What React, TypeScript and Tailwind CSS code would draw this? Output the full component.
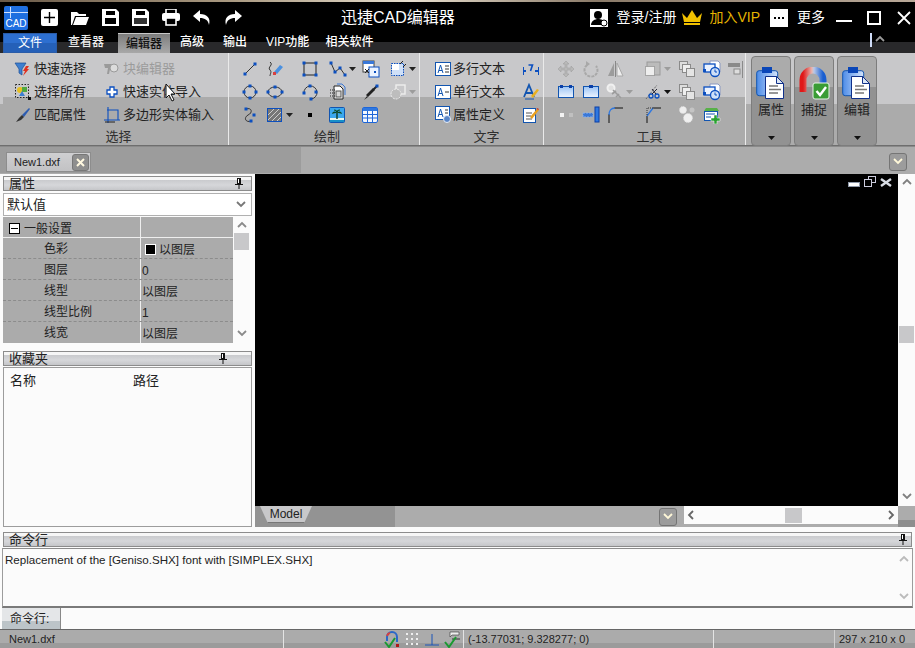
import type { ReactNode } from "react";

const BLUE = "#0b4fc0";

function Ico({ children, w = 18, h = 18 }: { children: ReactNode; w?: number; h?: number }) {
  return (
    <svg width={w} height={h} viewBox={`0 0 ${w} ${h}`} className="block shrink-0">
      {children}
    </svg>
  );
}

function Dot({ x, y, s = 3 }: { x: number; y: number; s?: number }) {
  return <rect x={x - s / 2} y={y - s / 2} width={s} height={s} fill={BLUE} />;
}

function Caret({ color = "#222" }: { color?: string }) {
  return (
    <svg width="7" height="4" viewBox="0 0 7 4" className="block shrink-0">
      <path d="M0 0h7L3.5 4z" fill={color} />
    </svg>
  );
}

const I = {
  funnel: (
    <Ico>
      <path d="M1 3h11L8 9v6l-3-2V9z" fill="#3d7fd0" stroke="#1d4f96" strokeWidth=".7" />
      <path d="M12 6l-3 5h2l-2 5 6-7h-2l2-3z" fill="#e03020" />
    </Ico>
  ),
  selectAll: (
    <Ico>
      <rect x="1.5" y="1.5" width="13" height="13" fill="none" stroke="#222" strokeDasharray="1.5 1.5" />
      <circle cx="6" cy="7" r="3" fill="#e8c020" />
      <rect x="8" y="4" width="5" height="5" fill="#50a840" />
      <path d="M5 13l3-5 3 5z" fill="#3d7fd0" />
      <rect x="14" y="14" width="3" height="3" fill="#111" />
    </Ico>
  ),
  brush: (
    <Ico>
      <path d="M15 2l1 1-6 8-2-2z" fill="#2d5cb0" />
      <path d="M8 9l2 2-3 3-5 2 3-4z" fill="#333" />
    </Ico>
  ),
  blockEdit: (
    <Ico>
      <path d="M1 4h8l2 2v3H7l-1 5H4l1-6H2z" fill="#9a9a9a" />
      <circle cx="11" cy="8" r="4" fill="#dcdcdc" stroke="#9a9a9a" />
    </Ico>
  ),
  plus: (
    <Ico>
      <path d="M7 4h4v3h3v4h-3v3H7v-3H4V7h3z" fill="#fff" stroke={BLUE} strokeWidth="1.3" />
    </Ico>
  ),
  polyInput: (
    <Ico>
      <path d="M5 1v16M1 14h16M4 4h11v10" fill="none" stroke={BLUE} strokeWidth="1.1" />
      <path d="M2 16h10" stroke="#222" />
    </Ico>
  ),
  line: (
    <Ico>
      <path d="M4 14L14 4" stroke="#333" />
      <Dot x={4} y={14} />
      <Dot x={14} y={4} />
    </Ico>
  ),
  pencilCurve: (
    <Ico>
      <path d="M4 2c4 3-3 5 0 8 2 2 0 4 0 6" fill="none" stroke="#333" />
      <path d="M8 12l6-7 3 2-6 7z" fill="#4a90e0" />
      <rect x="7" y="12" width="3" height="3" fill="#d84040" />
    </Ico>
  ),
  rect: (
    <Ico>
      <rect x="3" y="3" width="12" height="12" fill="none" stroke="#222" />
      <Dot x={3} y={3} />
      <Dot x={15} y={3} />
      <Dot x={3} y={15} />
      <Dot x={15} y={15} />
    </Ico>
  ),
  polyline: (
    <Ico>
      <path d="M2 3l4 9 5-4 5 7" fill="none" stroke="#333" />
      <Dot x={2} y={3} />
      <Dot x={6} y={12} />
      <Dot x={11} y={8} />
      <Dot x={16} y={15} />
    </Ico>
  ),
  copyRect: (
    <Ico>
      <rect x="1" y="1" width="11" height="11" fill="#fff" stroke="#444" />
      <rect x="1" y="1" width="11" height="3" fill="#3a78d8" />
      <rect x="7" y="7" width="10" height="10" fill="#eaf2ff" stroke={BLUE} />
      <path d="M3 9l4 4M3 13l4-4" stroke="#222" />
      <Dot x={13} y={12} s={2} />
    </Ico>
  ),
  hatchBox: (
    <Ico>
      <rect x="2.5" y="3.5" width="12" height="12" fill="#cfe0f8" stroke={BLUE} strokeDasharray="1.5 1" />
      <path d="M3 4h7v6H3z" fill="#fff" />
      <path d="M11 4l3-3M14 7l3-3" stroke="#222" />
    </Ico>
  ),
  circle: (
    <Ico>
      <circle cx="9" cy="9" r="6" fill="none" stroke="#333" />
      <Dot x={9} y={3} />
      <Dot x={3} y={9} />
      <Dot x={15} y={9} />
      <Dot x={9} y={15} />
    </Ico>
  ),
  ellipse: (
    <Ico>
      <ellipse cx="9" cy="9" rx="7" ry="5" fill="none" stroke="#333" />
      <Dot x={9} y={4} />
      <Dot x={2} y={9} />
      <Dot x={16} y={9} />
      <Dot x={9} y={14} />
    </Ico>
  ),
  arc: (
    <Ico>
      <path d="M3 10A6.500 6.500 0 1 1 10 16" fill="none" stroke="#333" />
      <Dot x={3} y={10} />
      <Dot x={9} y={3} />
      <Dot x={15} y={9} />
      <Dot x={10} y={16} />
    </Ico>
  ),
  doc3: (
    <Ico>
      <path d="M5 3h6l3 3v10H5z" fill="#fff" stroke="#222" />
      <path d="M8 1h5l3 3v8" fill="none" stroke="#3a78d8" />
      <path d="M1 7h5M1 10h5M1 13h5" stroke="#222" strokeDasharray="1 1" />
      <rect x="7" y="8" width="5" height="6" fill="#d8d8d8" stroke="#555" />
    </Ico>
  ),
  dropper: (
    <Ico>
      <path d="M4 12l7-7 2 2-7 7z" fill="#222" />
      <path d="M11 7l4-4" stroke="#222" strokeWidth="2" />
      <path d="M2 17l3-4 1 1z" fill="#222" />
      <Dot x={15} y={3} />
    </Ico>
  ),
  ghost: (
    <Ico>
      <rect x="7" y="2" width="9" height="9" fill="none" stroke="#eee" strokeWidth="1.4" />
      <circle cx="7" cy="11" r="5" fill="#bdbdbd" stroke="#eee" strokeDasharray="2 1" />
    </Ico>
  ),
  spline: (
    <Ico>
      <path d="M5 3c6-2 7 4 2 6-5 3-2 8 3 6" fill="none" stroke="#333" />
      <Dot x={5} y={3} />
      <Dot x={13} y={9} />
      <Dot x={10} y={15} />
    </Ico>
  ),
  hatch: (
    <Ico>
      <rect x="1.500" y="2.500" width="14" height="13" fill="#777" stroke={BLUE} />
      <path d="M2 9l6-6M2 14l11-11M6 15l9-9M11 15l4-4" stroke="#ccc" />
    </Ico>
  ),
  point: (
    <Ico>
      <rect x="7" y="7" width="4" height="4" fill="#000" />
    </Ico>
  ),
  palm: (
    <Ico w={16} h={16}>
      <rect x=".5" y=".5" width="15" height="15" rx="1" fill="#3aa8ee" stroke="#1255b0" />
      <rect x="1" y="11" width="14" height="2" fill="#e8f8f0" />
      <rect x="1" y="13" width="14" height="2" fill="#1890c8" />
      <path d="M8 12V6" stroke="#0c3a20" strokeWidth="1.4" />
      <path d="M3 7c1-3 3-3 5-1 2-2 4-2 5 1-2-1-3-1-5-1-2 0-3 0-5 1z" fill="#0c4a28" />
      <path d="M5 3c2 0 3 1 3 3 0-2 1-3 3-3" fill="none" stroke="#0c4a28" strokeWidth="1.2" />
    </Ico>
  ),
  table: (
    <Ico w={16} h={16}>
      <rect x=".5" y=".5" width="15" height="15" rx="1.5" fill="#f4f8ff" stroke="#1e66d8" />
      <rect x="1" y="1" width="14" height="3" fill="#2f78e0" />
      <path d="M1 7.500h14M1 11h14M5.500 4v11M10.500 4v11" stroke="#1e66d8" />
    </Ico>
  ),
  textM: (
    <Ico w={16} h={16}>
      <rect x=".5" y="1.500" width="15" height="13" fill="#fff" stroke="#1255b0" />
      <path d="M3 12l2.500-8L8 12M4 9.500h3" fill="none" stroke="#1255b0" />
      <path d="M10 5h4M10 8h4M10 11h4" stroke="#333" />
    </Ico>
  ),
  textS: (
    <Ico w={16} h={16}>
      <rect x=".5" y="1.500" width="15" height="13" fill="#fff" stroke="#1255b0" />
      <path d="M3 12l2.500-8L8 12M4 9.500h3" fill="none" stroke="#1255b0" />
      <path d="M10 8h4" stroke="#333" />
    </Ico>
  ),
  textAttr: (
    <Ico w={16} h={17}>
      <rect x=".5" y=".5" width="14" height="13" fill="#fff" stroke="#1255b0" />
      <path d="M3 11l2.500-8L8 11M4 8.500h3" fill="none" stroke="#1255b0" />
      <path d="M10 4h3M10 7h3" stroke="#333" />
      <circle cx="12" cy="13" r="3.500" fill="#5a86c8" stroke="#e8eef8" />
    </Ico>
  ),
  num: (
    <Ico w={16} h={16}>
      <path d="M0 10h16" stroke="#0b4fc0" strokeDasharray="3 1" strokeWidth="2" />
      <rect x="4" y="3" width="8" height="8" fill="#c8c8ca" />
      <path d="M5.500 4h4l-2 6" fill="none" stroke="#0b4fc0" strokeWidth="1.600" />
      <path d="M.5 6v8M15.500 6v8" stroke="#0b4fc0" />
    </Ico>
  ),
  aPen: (
    <Ico w={16} h={18}>
      <path d="M1 14L6 2l5 12M3 10h6" fill="none" stroke="#1255b0" strokeWidth="1.800" />
      <path d="M8 13l6-7 2 1-6 8z" fill="#e8b020" />
      <path d="M2 16h9" stroke="#1255b0" />
    </Ico>
  ),
  editNote: (
    <Ico w={16} h={18}>
      <rect x=".5" y="2.500" width="12" height="14" fill="#fff" stroke="#1255b0" />
      <path d="M3 7h6M3 10h5M3 13h6" stroke="#555" />
      <path d="M7 11l7-8 2 1-7 9z" fill="#e8a020" />
      <path d="M13 3l2-1 1 2" fill="#d03020" />
    </Ico>
  ),
  move: (
    <Ico>
      <path d="M9 1l3 3h-2v4h4V6l3 3-3 3v-2h-4v4h2l-3 3-3-3h2v-4H4v2L1 9l3-3v2h4V4H6z" fill="#b8b8b8" stroke="#9a9a9a" strokeWidth=".5" />
    </Ico>
  ),
  rotate: (
    <Ico>
      <path d="M5 5a6.500 6.500 0 1 0 9 1" fill="none" stroke="#a8a8a8" strokeWidth="2" strokeDasharray="3 1" />
      <path d="M4 1l4 3-4 3z" fill="#a8a8a8" />
    </Ico>
  ),
  mirror: (
    <Ico>
      <path d="M8 3v13L2 16z" fill="#9c9c9c" />
      <path d="M11 3v13h6z" fill="#eee" stroke="#a8a8a8" />
      <path d="M9.500 1v16" stroke="#888" />
    </Ico>
  ),
  scaleBox: (
    <Ico>
      <rect x="3" y="2" width="13" height="13" fill="#bbb" stroke="#9a9a9a" />
      <rect x="1.500" y="6.500" width="9" height="9" fill="#eee" stroke="#777" strokeDasharray="1 1" />
    </Ico>
  ),
  layers: (
    <Ico>
      <rect x="1.500" y="1.500" width="8" height="8" fill="#ddd" stroke="#8a8a8a" />
      <rect x="4.500" y="4.500" width="8" height="8" fill="#eee" stroke="#8a8a8a" />
      <rect x="8.500" y="8.500" width="8" height="8" fill="#e4e4e4" stroke="#8a8a8a" />
    </Ico>
  ),
  windowClock: (
    <Ico>
      <path d="M7 1h8l2 2v9H7z" fill="#fff" stroke="#8a98c0" />
      <rect x="1" y="4" width="11" height="8" fill="#eaf2ff" stroke={BLUE} strokeWidth="1.300" />
      <rect x="0" y="9" width="3" height="3" fill={BLUE} />
      <circle cx="12" cy="12" r="4.500" fill="#cfe0f8" stroke={BLUE} strokeWidth="1.300" />
      <path d="M12 9.500V12h2" stroke={BLUE} fill="none" />
    </Ico>
  ),
  align: (
    <Ico>
      <rect x="1" y="3" width="12" height="4" fill="#8a8a8a" />
      <rect x="7" y="9" width="6" height="5" fill="#ddd" stroke="#8a8a8a" />
      <path d="M15.500 1v17" stroke="#8a8a8a" />
    </Ico>
  ),
  cal: (
    <Ico>
      <defs>
        <linearGradient id="calg" x1="0" y1="0" x2="0" y2="1">
          <stop offset="0" stopColor="#9cc4f4" />
          <stop offset="1" stopColor="#eef5ff" />
        </linearGradient>
      </defs>
      <rect x="1.500" y="3.500" width="15" height="11" fill="url(#calg)" stroke="#1255b0" />
      <rect x="3" y="2" width="3" height="3" fill="#0b3fa8" />
      <rect x="12" y="2" width="3" height="3" fill="#0b3fa8" />
    </Ico>
  ),
  calWide: (
    <Ico>
      <rect x="1.500" y="3.500" width="15" height="11" fill="url(#calg)" stroke="#1255b0" />
      <rect x="7" y="2" width="4" height="3" fill="#0b3fa8" />
    </Ico>
  ),
  magGhost: (
    <Ico>
      <circle cx="5" cy="5" r="3.500" fill="#e0e0e0" stroke="#f0f0f0" strokeWidth="2" />
      <path d="M7 7l8 8M6 11l4-3M10 14l3-3" stroke="#9c9c9c" strokeWidth="1.600" />
    </Ico>
  ),
  scissors: (
    <Ico>
      <path d="M2 16L13 2" stroke="#555" strokeDasharray="1 1" />
      <circle cx="7" cy="13" r="2" fill="none" stroke={BLUE} strokeWidth="1.300" />
      <circle cx="13" cy="13" r="2" fill="none" stroke={BLUE} strokeWidth="1.300" />
      <path d="M8 11l5-5M12 11L8 6" stroke="#223" />
    </Ico>
  ),
  dots2: (
    <Ico>
      <rect x="3" y="7" width="4" height="4" fill="#f4f4f4" />
      <rect x="12" y="7" width="4" height="4" fill="#c0c0c0" />
    </Ico>
  ),
  extend: (
    <Ico>
      <rect x="1" y="7" width="10" height="4" fill="#3a78d8" stroke="#8ab0e8" strokeDasharray="2 1" />
      <rect x="13" y="1" width="4" height="15" fill="#2f78e0" stroke="#0b3fa8" />
    </Ico>
  ),
  fillet: (
    <Ico>
      <path d="M3 17V8" stroke="#111" />
      <path d="M8 2h9" stroke="#111" />
      <path d="M3 9C3 5 5 2 9 2" fill="none" stroke="#2f78e0" strokeWidth="1.300" />
    </Ico>
  ),
  chamfer: (
    <Ico>
      <path d="M3 17V10" stroke="#111" />
      <path d="M9 2h8" stroke="#111" />
      <path d="M3 10l6-8" stroke="#2f78e0" strokeWidth="1.400" />
      <path d="M3 9V2h6" fill="none" stroke="#333" strokeDasharray="1 1" />
    </Ico>
  ),
  blobs: (
    <Ico>
      <circle cx="5" cy="4" r="3.500" fill="#eee" stroke="#ddd" strokeDasharray="1 1" />
      <circle cx="14" cy="4" r="2.500" fill="#c4c4c4" />
      <circle cx="10" cy="12" r="4.500" fill="#f0f0f0" stroke="#ddd" strokeDasharray="1 1" />
    </Ico>
  ),
  addLayer: (
    <Ico>
      <path d="M1 5l2-3h11l2 3z" fill="#58b048" />
      <rect x="1.500" y="5.500" width="13" height="9" fill="#fff" stroke="#1255b0" />
      <path d="M3 8h9M3 11h5" stroke="#1255b0" />
      <path d="M11 9h3v3h3v3h-3v3h-3v-3H8v-3h3z" fill="#2aa030" stroke="#fff" strokeWidth=".5" />
    </Ico>
  ),
};

function Clipboard() {
  return (
    <svg width="30" height="33" viewBox="0 0 30 33" className="block">
      <defs>
        <linearGradient id="clipg" x1="0" y1="0" x2="1" y2="0">
          <stop offset="0" stopColor="#4d8ce8" />
          <stop offset="1" stopColor="#d4e4fb" />
        </linearGradient>
      </defs>
      <rect x=".7" y="3.700" width="21" height="25" rx="2.500" fill="url(#clipg)" stroke="#1255b0" />
      <rect x="6" y="0" width="10" height="6" fill="#0a46b8" />
      <path d="M9.500 9.500h11l7 7v15h-18z" fill="#fff" stroke="#10308a" />
      <path d="M20.500 9.500v7h7z" fill="#dbe6f5" stroke="#10308a" />
      <path d="M13 19h9M13 22.500h12M13 26h9" stroke="#777" strokeWidth="1.600" />
    </svg>
  );
}

function Magnet() {
  return (
    <svg width="32" height="33" viewBox="0 0 32 33" className="block">
      <defs>
        <linearGradient id="mg" x1="0" y1="0" x2="1" y2="0">
          <stop offset="0" stopColor="#e01818" />
          <stop offset=".45" stopColor="#e8b8b0" />
          <stop offset=".55" stopColor="#b8c8e8" />
          <stop offset="1" stopColor="#1a5ed0" />
        </linearGradient>
      </defs>
      <path d="M5 25V13a10 10 0 0 1 20 0v10" fill="none" stroke="url(#mg)" strokeWidth="7" />
      <rect x="15" y="16" width="16" height="16" rx="2" fill="#3a9c34" stroke="#e8f4e8" />
      <path d="M18.500 24l3.500 4 6-8" fill="none" stroke="#fff" strokeWidth="2.400" />
    </svg>
  );
}

function IconRow({ cols, items }: { cols: string; items: ReactNode[] }) {
  return (
    <div className={`grid h-[23px] items-center justify-items-start ${cols}`}>
      {items.map((it, i) => (
        <div key={i} className="flex items-center gap-[2px]">
          {it}
        </div>
      ))}
    </div>
  );
}

function withCaret(icon: ReactNode, color?: string) {
  return (
    <>
      {icon}
      <Caret color={color} />
    </>
  );
}

function SelectItem({ icon, label, muted }: { icon: ReactNode; label: string; muted?: boolean }) {
  return (
    <div className="flex h-[23px] items-center gap-[2px]">
      {icon}
      <span className={`text-[13px] whitespace-nowrap ${muted ? "text-[#9b9b9b]" : "text-[#222]"}`}>{label}</span>
    </div>
  );
}

function RibbonGroup({ width, label, labelPad, children }: { width: string; label: string; labelPad: string; children: ReactNode }) {
  return (
    <div className={`relative h-full border-r border-[#eaeaea] bg-[linear-gradient(#c8c8ca_44px,#ababab_44px)] pt-[4px] ${width}`}>
      {children}
      <div className={`absolute right-0 bottom-[-1px] left-0 text-center text-[13px] leading-[18px] text-[#2f2f2f] ${labelPad}`}>{label}</div>
    </div>
  );
}

function BigButton({ icon, label }: { icon: ReactNode; label: string }) {
  return (
    <div className="flex h-[90px] w-[40px] flex-col items-center rounded-[4px] border border-[#7d7d7d] bg-[linear-gradient(#ababab_30px,#929292_30px)] pt-[10px]">
      <div className="flex h-[33px] items-center">{icon}</div>
      <div className="text-[13px] leading-[20px] text-[#222]">{label}</div>
      <div className="mt-auto mb-[5px]">
        <Caret color="#111" />
      </div>
    </div>
  );
}

function PanelTitle({ label, pinRight }: { label: string; pinRight: number }) {
  return (
    <div className="flex h-[15px] items-center justify-between border border-[#8c8c8c] bg-[linear-gradient(#f6f6f6_3px,#c9cacd_3px,#d6d7da_8px,#c5c6c9)] pr-[3px] pl-[5px]">
      <span className="text-[13px] leading-[13px] text-[#222]">{label}</span>
      <span style={{ marginRight: pinRight }}>
        <svg width="8" height="11" viewBox="0 0 8 11" className="block">
          <path d="M2 0h4v6h2v1H0V6h2zM3.500 7h1v4h-1z" fill="#111" />
          <rect x="3" y="1" width="1" height="4" fill="#fff" />
        </svg>
      </span>
    </div>
  );
}

function Chevron({ dir, className = "" }: { dir: "up" | "down" | "left" | "right"; className?: string }) {
  const d = { up: "M1 6l4-4 4 4", down: "M1 2l4 4 4-4", left: "M7 1L3 5l4 4", right: "M3 1l4 4-4 4" }[dir];
  return (
    <svg width="10" height="10" viewBox="0 0 10 10" className={`block ${className}`}>
      <path d={d} fill="none" stroke="currentColor" strokeWidth="1.800" />
    </svg>
  );
}

function ChevronBtn() {
  return (
    <div className="flex h-[18px] w-[18px] items-center justify-center rounded-[3px] border border-[#757575] bg-[#9c9c9c] text-[#fff8d8]">
      <Chevron dir="down" />
    </div>
  );
}

const PROPS: [string, ReactNode][] = [
  ["色彩", (
    <span className="flex items-center gap-[3px] pl-[3px]">
      <span className="block h-[11px] w-[11px] border border-white bg-black" />
      以图层
    </span>
  )],
  ["图层", "0"],
  ["线型", "以图层"],
  ["线型比例", "1"],
  ["线宽", "以图层"],
];

export default function App() {
  const drawCols = "grid-cols-[25px_35px_28px_33px_27px_30px]";
  const toolCols = "grid-cols-[25px_24px_38px_34px_25px_24px_18px]";
  return (
    <div className="relative flex h-[648px] w-[915px] flex-col overflow-hidden bg-[#fbfbfb] font-['Liberation_Sans','Noto_Sans_CJK_SC',sans-serif]">
      {/* title bar */}
      <div className="h-[2px] bg-[linear-gradient(90deg,#6a5a48,#a89880_25%,#e8e0d0_45%,#8a7a68_65%,#b8a898)]" />
      <div className="relative flex h-[31px] items-center bg-black text-white">
        <svg width="24" height="24" viewBox="0 0 24 24" className="ml-[4px]">
          <rect width="24" height="24" rx="2" fill="#1f6fe0" />
          <path d="M0 6.500h24M6.500 1v11" stroke="#cfe0ff" />
          <text x="12" y="21" textAnchor="middle" fontSize="10" fill="#fff" fontFamily="Liberation Sans">CAD</text>
        </svg>
        <div className="ml-[13px] flex items-center gap-[13px]">
          <svg width="17" height="17" viewBox="0 0 17 17"><rect width="17" height="17" rx="2" fill="#fff" /><path d="M8.500 3v11M3 8.500h11" stroke="#000" strokeWidth="1.400" /></svg>
          <svg width="18" height="15" viewBox="0 0 18 15"><path d="M0 2h6l2 2h7v2H4L1 15H0z" fill="#fff" /><path d="M5 7h13l-3 8H2z" fill="#fff" /></svg>
          <svg width="17" height="17" viewBox="0 0 17 17"><path d="M0 0h14l3 3v14H0z" fill="#fff" /><rect x="4" y="2" width="9" height="4" fill="#000" /><rect x="3" y="9" width="11" height="6" fill="#000" /></svg>
          <svg width="17" height="17" viewBox="0 0 17 17"><path d="M0 0h14l3 3v14H0z" fill="#fff" /><rect x="4" y="2" width="9" height="4" fill="#000" /><rect x="2" y="9" width="13" height="6" fill="#333" /></svg>
          <svg width="18" height="17" viewBox="0 0 18 17"><rect x="4" y="0" width="10" height="5" fill="none" stroke="#fff" strokeWidth="1.600" /><rect y="4" width="18" height="8" rx="2" fill="#fff" /><rect x="4" y="9" width="10" height="7" fill="#000" stroke="#fff" strokeWidth="1.600" /></svg>
          <svg width="18" height="17" viewBox="0 0 18 17"><path d="M7 1L0 7l7 6V9c5 0 8 2 9 7 2-7-2-11-9-11z" fill="#fff" /></svg>
          <svg width="18" height="17" viewBox="0 0 18 17"><path d="M11 1l7 6-7 6V9C6 9 3 11 2 16 0 9 4 5 11 5z" fill="#fff" /></svg>
        </div>
        <div className="absolute left-[341px] text-[16px] leading-[20px]">迅捷CAD编辑器</div>
        <div className="ml-auto flex items-center">
          <svg width="18" height="18" viewBox="0 0 18 18"><rect width="18" height="18" fill="#fff" /><circle cx="8" cy="6" r="4" fill="#000" /><path d="M1 16c0-4 4-6 7-6s6 1 6 3v3z" fill="#000" /><circle cx="14" cy="14" r="3" fill="#fff" stroke="#000" /></svg>
          <span className="ml-[9px] text-[14px]">登录/注册</span>
          <svg width="22" height="17" viewBox="0 0 22 17" className="ml-[5px]"><path d="M1 4l5 5 5-8 5 8 5-5-2 9H3z" fill="#f0c000" /><rect x="3" y="14" width="16" height="2" fill="#f0c000" /></svg>
          <span className="ml-[6px] text-[14px] text-[#e6b400]">加入VIP</span>
          <div className="ml-[10px] flex h-[18px] w-[18px] items-center justify-center gap-[2px] bg-white">
            <span className="h-[2px] w-[2px] bg-black" />
            <span className="h-[2px] w-[2px] bg-black" />
            <span className="h-[2px] w-[2px] bg-black" />
          </div>
          <span className="ml-[9px] text-[14px]">更多</span>
          <svg width="16" height="3" viewBox="0 0 16 3" className="mt-[8px] ml-[11px]"><rect width="16" height="2" fill="#fff" /></svg>
          <svg width="14" height="14" viewBox="0 0 14 14" className="ml-[15px]"><rect x="1" y="1" width="12" height="12" fill="none" stroke="#fff" strokeWidth="2" /></svg>
          <svg width="14" height="14" viewBox="0 0 14 14" className="mr-[4px] ml-[16px]"><path d="M1 1l12 12M13 1L1 13" stroke="#fff" strokeWidth="1.800" /></svg>
        </div>
      </div>

      {/* menu tabs */}
      <div className="relative flex h-[20px] items-end bg-[linear-gradient(#000_9px,#29292b_9px)] text-[12px] leading-[21px] font-medium text-white">
        <div className="ml-[3px] h-[20px] w-[54px] border border-[#2a5ca8] bg-[linear-gradient(#2d6fd0,#2d6fd0_50%,#2560b8_50%)] text-center text-[12px] leading-[18px] font-normal">文件</div>
        <div className="ml-[11px] w-[36px] whitespace-nowrap text-[#eee]">查看器</div>
        <div className="ml-[14px] h-[20px] w-[52px] border-t border-[#c8c8c8] bg-[linear-gradient(#7d7d7d,#a8a8a8)] text-center text-[#111]">编辑器</div>
        <div className="ml-[10px]">高级</div>
        <div className="ml-[19px]">输出</div>
        <div className="ml-[19px]">VIP功能</div>
        <div className="ml-[16px]">相关软件</div>
        <div className="absolute top-0 left-[870px] flex items-center gap-[3px]">
          <span className="block h-[14px] w-[2px] bg-[#cfdcf8]" />
          <span className="text-[#9a9a9a]"><Chevron dir="up" /></span>
        </div>
      </div>

      {/* ribbon */}
      <div className="flex h-[93px] border-b border-[#6e6e6e] bg-[linear-gradient(#c8c8ca_51px,#ababab_51px)] pl-[3px]">
        <RibbonGroup width="w-[226px]" label="选择" labelPad="pl-[6px]">
          <div className="flex pl-[11px]">
            <div className="w-[89px]">
              <SelectItem icon={I.funnel} label="快速选择" />
              <SelectItem icon={I.selectAll} label="选择所有" />
              <SelectItem icon={I.brush} label="匹配属性" />
            </div>
            <div>
              <SelectItem muted icon={I.blockEdit} label="块编辑器" />
              <SelectItem icon={I.plus} label="快速实体导入" />
              <SelectItem icon={I.polyInput} label="多边形实体输入" />
            </div>
          </div>
        </RibbonGroup>
        <RibbonGroup width="w-[191px]" label="绘制" labelPad="pl-[6px]">
          <div className="pl-[12px]">
            <IconRow cols={drawCols} items={[I.line, I.pencilCurve, I.rect, withCaret(I.polyline), I.copyRect, withCaret(I.hatchBox)]} />
            <IconRow cols={drawCols} items={[I.circle, I.ellipse, I.arc, I.doc3, I.dropper, withCaret(I.ghost, "#9c9c9c")]} />
            <IconRow cols={drawCols} items={[I.spline, withCaret(I.hatch), I.point, I.palm, I.table, <span />]} />
          </div>
        </RibbonGroup>
        <RibbonGroup width="w-[124px]" label="文字" labelPad="pl-[10px]">
          <div className="flex pl-[15px]">
            <div className="w-[86px]">
              <SelectItem icon={I.textM} label="多行文本" />
              <SelectItem icon={I.textS} label="单行文本" />
              <SelectItem icon={I.textAttr} label="属性定义" />
            </div>
            <div className="pl-[2px]">
              <div className="flex h-[23px] items-center">{I.num}</div>
              <div className="flex h-[23px] items-center">{I.aPen}</div>
              <div className="flex h-[23px] items-center">{I.editNote}</div>
            </div>
          </div>
        </RibbonGroup>
        <RibbonGroup width="w-[202px]" label="工具" labelPad="pl-[10px]">
          <div className="pl-[13px]">
            <IconRow cols={toolCols} items={[I.move, I.rotate, I.mirror, withCaret(I.scaleBox, "#9c9c9c"), I.layers, I.windowClock, I.align]} />
            <IconRow cols={toolCols} items={[I.cal, I.calWide, withCaret(I.magGhost, "#9c9c9c"), withCaret(I.scissors, "#111"), I.layers, I.windowClock, <span />]} />
            <IconRow cols={toolCols} items={[I.dots2, I.extend, I.fillet, I.chamfer, I.blobs, I.addLayer, <span />]} />
          </div>
        </RibbonGroup>
        <div className="flex gap-[3px] pt-[3px] pl-[5px]">
          <BigButton icon={<Clipboard />} label="属性" />
          <BigButton icon={<Magnet />} label="捕捉" />
          <BigButton icon={<Clipboard />} label="编辑" />
        </div>
      </div>

      {/* document tabs */}
      <div className="flex h-[28px] border-t border-[#8a8a8a] bg-[#acacac]">
        <div className="h-[26px] w-[301px] bg-[#9c9c9c] pt-[5px] pl-[6px]">
          <div className="flex h-[20px] w-[85px] items-center border border-[#8d8d8d] bg-[linear-gradient(#cfcfd1,#c2c2c4)] pl-[7px] text-[11px] text-[#222]">
            New1.dxf
            <div className="mr-[1px] ml-auto flex h-[17px] w-[17px] items-center justify-center rounded-[3px] border border-[#777] bg-[#8e8e8e]">
              <svg width="9" height="9" viewBox="0 0 9 9"><path d="M1 1l7 7M8 1L1 8" stroke="#fff8e0" strokeWidth="2" /></svg>
            </div>
          </div>
        </div>
        <div className="mt-[6px] mr-[8px] ml-auto">
          <ChevronBtn />
        </div>
      </div>

      {/* main */}
      <div className="flex h-[353px] shrink-0">
        <div className="flex w-[255px] flex-col pt-[2px] pr-[3px] pl-[3px]">
          <PanelTitle label="属性" pinRight={5} />
          <div className="mt-[2px] flex h-[23px] items-center justify-between border border-[#b0b0b0] bg-white pr-[5px] pl-[3px] text-[13px] text-[#222]">
            默认值
            <span className="text-[#777]"><Chevron dir="down" /></span>
          </div>
          <div className="mt-[1px] flex h-[126px] text-[12px] leading-[18px] text-[#222]">
            <div className="w-[230px] bg-[#ababab]">
              <div className="flex h-[21px] border-b border-[#eee]">
                <div className="flex w-[138px] items-center border-r border-[#eee] pt-[3px] pl-[6px]">
                  <span className="mr-[4px] flex h-[11px] w-[11px] items-center justify-center border border-black bg-white">
                    <span className="block h-[1px] w-[7px] bg-black" />
                  </span>
                  一般设置
                </div>
              </div>
              {PROPS.map(([name, value], i) => (
                <div key={name} className={`flex h-[21px] ${i < 4 ? "border-b border-dashed border-[#8c8c8c]" : ""}`}>
                  <div className="w-[138px] border-r border-[#eee] pt-[2px] pl-[41px]">{name}</div>
                  <div className="flex items-center pt-[3px] pl-[1px]">{value}</div>
                </div>
              ))}
            </div>
            <div className="flex w-[17px] flex-col items-center justify-between py-[4px] text-[#8a8a8a]">
              <div className="flex w-full flex-col items-center">
                <Chevron dir="up" />
                <div className="mt-[2px] h-[17px] w-[15px] bg-[#c8c8ca]" />
              </div>
              <Chevron dir="down" />
            </div>
          </div>
          <div className="mt-[8px]">
            <PanelTitle label="收藏夹" pinRight={21} />
          </div>
          <div className="mt-[1px] flex-1 border border-[#9c9c9c] bg-[#fbfbfb] pt-[3px] pl-[6px] text-[13px] text-[#222]">
            <div className="flex">
              <span className="w-[123px]">名称</span>
              <span>路径</span>
            </div>
          </div>
        </div>
        <div className="flex w-[660px] flex-col">
          <div className="flex h-[332px]">
            <div className="relative w-[643px] bg-black">
              <div className="absolute top-[2px] right-[6px] flex items-end gap-[4px]">
                <svg width="12" height="5" viewBox="0 0 12 5" className="block"><rect x=".5" y=".5" width="11" height="4" fill="#fff" stroke="#8e98a8" /></svg>
                <svg width="12" height="11" viewBox="0 0 12 11" className="block"><rect x="4.500" y=".5" width="7" height="6" fill="none" stroke="#ccd" /><rect x=".5" y="3.500" width="7" height="7" fill="#000" stroke="#ccd" /></svg>
                <svg width="12" height="9" viewBox="0 0 12 9" className="block"><path d="M1 1l10 7M11 1L1 8" stroke="#d8dce4" strokeWidth="2.400" /></svg>
              </div>
            </div>
            <div className="flex w-[17px] flex-col items-center bg-[#fbfbfb] py-[4px] text-[#808080]">
              <Chevron dir="up" />
              <div className="mt-[138px] h-[17px] w-[15px] bg-[#c8c8ca]" />
              <Chevron dir="down" className="mt-auto" />
            </div>
          </div>
          <div className="flex h-[21px] bg-[#acacac]">
            <div className="flex w-[140px] bg-[#939393] pl-[5px]">
              <div className="flex h-[17px] w-[52px] items-center justify-center border-b border-[#777] bg-[#c8c8ca] text-[12px] text-[#222] [clip-path:polygon(0_0,100%_0,85%_100%,15%_100%)]">Model</div>
            </div>
            <div className="mt-[2px] mr-[7px] ml-auto">
              <ChevronBtn />
            </div>
            <div className="flex h-[18px] w-[214px] items-center justify-between bg-[#fbfbfb] px-[2px] text-[#666]">
              <Chevron dir="left" />
              <div className="ml-[5px] h-[15px] w-[17px] bg-[#c8c8ca]" />
              <Chevron dir="right" />
            </div>
            <div className="w-[17px] bg-[linear-gradient(#acacac_14px,#8e8e8e_14px)]" />
          </div>
        </div>
      </div>

      {/* command line */}
      <div className="mt-[5px] px-[3px]">
        <PanelTitle label="命令行" pinRight={1} />
      </div>
      <div className="mx-[2px] mt-[1px] flex h-[60px] justify-between border-x border-t border-b-2 border-x-[#9c9c9c] border-t-[#8c8c8c] border-b-[#7a7a7a] bg-[#fbfbfb] pt-[2px] pl-[2px] text-[11.6px] leading-[17px] text-[#222]">
        <span className="whitespace-nowrap">Replacement of the [Geniso.SHX] font with [SIMPLEX.SHX]</span>
        <div className="flex w-[17px] flex-col items-center justify-between py-[4px] text-[#bbb]">
          <Chevron dir="up" />
          <Chevron dir="down" />
        </div>
      </div>
      <div className="flex h-[22px] border-b border-[#666] px-[2px]">
        <div className="flex w-[58px] items-center bg-[linear-gradient(#e4e6e8_60%,#bcc4c8_60%)] pl-[8px] text-[12px] text-[#222]">命令行:</div>
        <div className="flex-1 border-l border-[#888] bg-[#fbfbfb]" />
      </div>

      {/* status bar */}
      <div className="flex h-[18px] items-center bg-[linear-gradient(#ababab_13px,#9b9b9b_13px)] pl-[9px] text-[11px] text-[#222]">
        <span className="w-[274px]">New1.dxf</span>
        <div className="h-full w-[1px] bg-[#e4e4e4]" />
        <div className="ml-[100px] flex items-center gap-[4px]">
          <svg width="16" height="17" viewBox="0 0 16 17"><path d="M3 10V6a5 5 0 0 1 10 0v5" fill="none" stroke="#2a68c8" strokeWidth="2" /><path d="M3 5a4 4 0 0 1 3-3" stroke="#d84040" strokeWidth="2" /><path d="M1 11l4 5 6-9" fill="none" stroke="#1a9a30" strokeWidth="2" /><rect x="12" y="13" width="3" height="3" fill="#b01818" /></svg>
          <svg width="16" height="16" viewBox="0 0 16 16"><g fill="#eee"><rect x="2" y="2" width="2" height="2" /><rect x="7" y="2" width="2" height="2" /><rect x="12" y="2" width="2" height="2" /><rect x="2" y="7" width="2" height="2" /><rect x="7" y="7" width="2" height="2" /><rect x="12" y="7" width="2" height="2" /><rect x="2" y="12" width="2" height="2" /><rect x="7" y="12" width="2" height="2" /><rect x="12" y="12" width="2" height="2" /></g></svg>
          <svg width="16" height="16" viewBox="0 0 16 16"><path d="M8 3v11M1 14h14" stroke="#1a55b8" /></svg>
          <svg width="16" height="17" viewBox="0 0 16 17"><path d="M6 1h9v3H8l-2 2z" fill="#eee" stroke="#333" strokeWidth=".6" /><path d="M8 8h8" stroke="#333" /><path d="M1 11l4 5 7-10" fill="none" stroke="#1a9a30" strokeWidth="2" /></svg>
        </div>
        <div className="ml-[3px] h-full w-[1px] bg-[#e4e4e4]" />
        <span className="ml-[4px] w-[245px] whitespace-nowrap">(-13.77031; 9.328277; 0)</span>
        <div className="h-full w-[1px] bg-[#e4e4e4]" />
        <div className="ml-[120px] h-full w-[1px] bg-[#d0d0d0]" />
        <span className="ml-[4px] whitespace-nowrap">297 x 210 x 0</span>
      </div>

      {/* mouse pointer over the ribbon */}
      <svg width="13" height="19" viewBox="0 0 13 19" className="absolute top-[83px] left-[165px]">
        <path d="M1 1v14l3-3 3 6 2-1-3-6h4z" fill="#fff" stroke="#111" />
      </svg>
    </div>
  );
}
